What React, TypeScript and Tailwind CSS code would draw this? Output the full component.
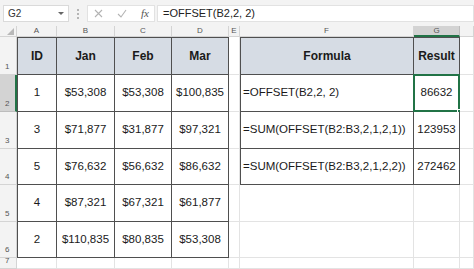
import React from "react";

const cols = [
  { key: "A", w: 40 },
  { key: "B", w: 58 },
  { key: "C", w: 57 },
  { key: "D", w: 57 },
  { key: "E", w: 11 },
  { key: "F", w: 174 },
  { key: "G", w: 46 },
  { key: "H", w: 14 },
];

const rowHeights = [38, 37, 37, 36, 37, 36, 11];

type Cell = { text?: string; bold?: boolean; head?: boolean; left?: boolean; box?: boolean };

const left: string[][] = [
  ["ID", "Jan", "Feb", "Mar"],
  ["1", "$53,308", "$53,308", "$100,835"],
  ["3", "$71,877", "$31,877", "$97,321"],
  ["5", "$76,632", "$56,632", "$86,632"],
  ["4", "$87,321", "$67,321", "$61,877"],
  ["2", "$110,835", "$80,835", "$53,308"],
];

const right: string[][] = [
  ["Formula", "Result"],
  ["=OFFSET(B2,2, 2)", "86632"],
  ["=SUM(OFFSET(B2:B3,2,1,2,1))", "123953"],
  ["=SUM(OFFSET(B2:B3,2,1,2,2))", "272462"],
];

function getCell(r: number, c: number): Cell {
  if (r < 6 && c < 4) return { text: left[r][c], bold: r === 0, head: r === 0, box: true };
  if (r < 4 && (c === 5 || c === 6)) {
    return { text: right[r][c - 5], bold: r === 0, head: r === 0, box: true, left: c === 5 && r > 0 };
  }
  return {};
}

export default function App() {
  return (
    <div className="w-[474px] h-[269px] overflow-hidden bg-white font-['Liberation_Sans',Arial,sans-serif] text-[#1a1a1a]">
      {/* Formula bar */}
      <div className="h-[26px] bg-[#f3f3f3] flex items-start pt-[5px] pl-[3px] gap-0">
        <div className="w-[66px] h-[17px] bg-white border border-[#dadada] flex items-center justify-between px-[4px]">
          <span className="text-[10px] text-[#333]">G2</span>
          <span className="w-0 h-0 border-l-[3px] border-r-[3px] border-t-[3px] border-l-transparent border-r-transparent border-t-[#666]" />
        </div>
        <div className="w-[18px] h-[17px] flex flex-col items-center justify-center gap-[2px]">
          <span className="w-[2px] h-[2px] bg-[#b5b5b5]" />
          <span className="w-[2px] h-[2px] bg-[#b5b5b5]" />
          <span className="w-[2px] h-[2px] bg-[#b5b5b5]" />
        </div>
        <div className="w-[68px] h-[17px] bg-white border border-[#e2e2e2] flex items-center pl-[6px] gap-[14px]">
          <svg width="9" height="9" viewBox="0 0 9 9"><path d="M1 1L8 8M8 1L1 8" stroke="#b3b3b3" strokeWidth="1.1" /></svg>
          <svg width="10" height="9" viewBox="0 0 10 9"><path d="M1 5L4 8L9 1" stroke="#b3b3b3" strokeWidth="1.1" fill="none" /></svg>
          <span className="font-['Liberation_Serif',serif] italic text-[11px] text-[#555]">fx</span>
        </div>
        <div className="ml-[2px] flex-1 h-[17px] bg-white border border-[#e2e2e2] flex items-center pl-[5px]">
          <span className="text-[11px] text-[#222]">=OFFSET(B2,2, 2)</span>
        </div>
      </div>

      {/* Column headers */}
      <div className="flex h-[11px] bg-[#f3f3f3]">
        <div className="w-[17px] h-full border-r border-b border-[#d4d4d4] flex items-end justify-end pr-[2px] pb-[1px]">
          <svg width="7" height="7" viewBox="0 0 7 7"><path d="M7 0V7H0Z" fill="#b8b8b8" /></svg>
        </div>
        {cols.map((c) => (
          <div
            key={c.key}
            style={{ width: c.w }}
            className={
              c.key === "G"
                ? "h-full bg-[#d3d3d3] border-r border-[#bdbdbd] border-b-2 border-b-[#217346] flex items-center justify-center text-[8px] text-[#555]"
                : "h-full border-r border-b border-[#d4d4d4] flex items-center justify-center text-[8px] text-[#555]"
            }
          >
            {c.key !== "H" ? c.key : ""}
          </div>
        ))}
      </div>

      {/* Rows */}
      {rowHeights.map((h, r) => (
        <div key={r} className="flex" style={{ height: h }}>
          <div
            className={
              r === 1
                ? "w-[17px] h-full bg-[#d3d3d3] border-r-2 border-r-[#217346] border-b border-b-[#bdbdbd] flex items-end pl-[5px] pb-[1px] text-[8px] text-[#555]"
                : "w-[17px] h-full bg-[#f3f3f3] border-r border-b border-[#d4d4d4] flex items-end pl-[5px] pb-[1px] text-[8px] text-[#555]"
            }
          >
            {r + 1}
          </div>
          {cols.map((c, ci) => {
            const cell = getCell(r, ci);
            const selected = r === 1 && ci === 6;
            const base = cell.box
              ? "border-r border-b border-[#4f4f4f]" +
                (r === 0 ? " border-t" : "") +
                (ci === 0 || ci === 5 ? " border-l" : "") +
                (cell.head ? " bg-[#d6dce4]" : " bg-white")
              : "border-r border-b border-[#e3e3e3] bg-white";
            return (
              <div
                key={c.key}
                style={{ width: c.w }}
                className={
                  "relative h-full flex items-center whitespace-nowrap " +
                  base +
                  (cell.left ? " justify-start pl-[2px]" : " justify-center") +
                  (cell.bold ? " font-bold text-[12px]" : " text-[11.5px]")
                }
              >
                {cell.text}
                {selected && (
                  <span className="absolute -inset-[1px] border-2 border-[#217346]">
                    <span className="absolute -right-[3px] -bottom-[3px] w-[4px] h-[4px] bg-[#217346] border border-white" />
                  </span>
                )}
              </div>
            );
          })}
        </div>
      ))}
    </div>
  );
}
